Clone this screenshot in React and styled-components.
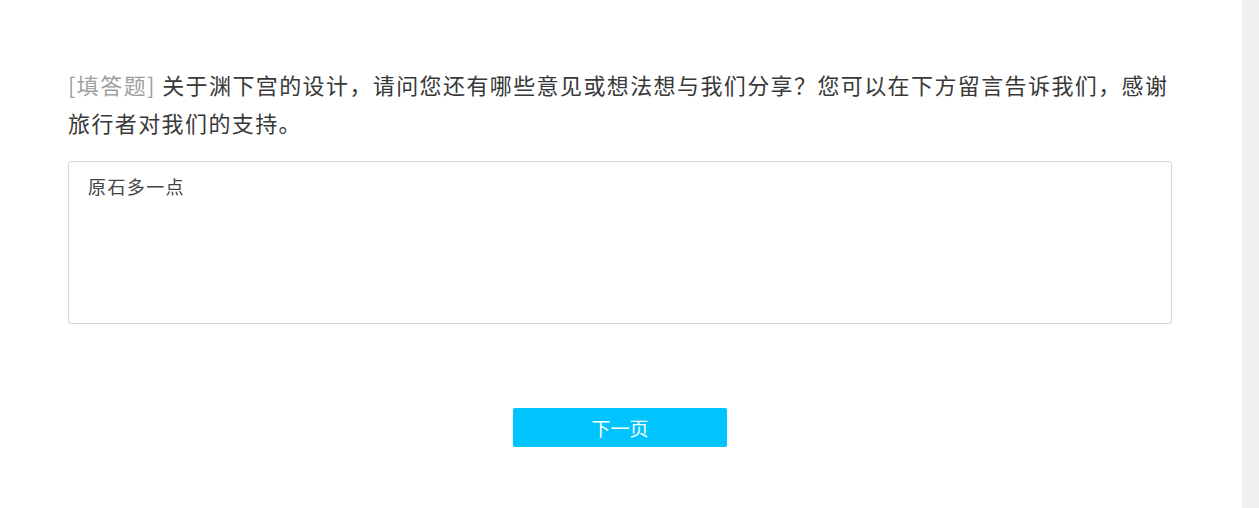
import React from 'react'
import styled, { createGlobalStyle } from 'styled-components'

const GlobalStyle = createGlobalStyle`
  html, body {
    margin: 0;
    padding: 0;
    background: #fff;
  }
  body {
    font-family: "Noto Sans CJK SC", "Noto Sans", sans-serif;
  }
`

export default function App() {
  return (
    <>
      <GlobalStyle />
      <Page>
        <Main>
          <Survey>
            <Question>
              <Tag>[填答题]</Tag> 关于渊下宫的设计，请问您还有哪些意见或想法想与我们分享？您可以在下方留言告诉我们，感谢旅行者对我们的支持。
            </Question>
            <Answer readOnly defaultValue="原石多一点" />
            <Footer>
              <NextButton type="button">下一页</NextButton>
            </Footer>
          </Survey>
        </Main>
        <ScrollTrack />
      </Page>
    </>
  )
}

const Page = styled.div`
  display: flex;
  width: 100vw;
  height: 100vh;
  overflow: hidden;
`

const Main = styled.div`
  flex: 1;
  padding-top: 65px;
`

const Survey = styled.div`
  width: 1104px;
  margin: 0 70px 0 68px;
  display: flex;
  flex-direction: column;
`

const Question = styled.div`
  font-size: 22px;
  letter-spacing: 1.4px;
  line-height: 38px;
  color: #383838;
`

const Tag = styled.span`
  color: #a0a0a0;
`

const Answer = styled.textarea`
  margin-top: 20px;
  box-sizing: border-box;
  width: 100%;
  height: 163px;
  padding: 12px 19px;
  border: 1px solid #d6d6d6;
  border-radius: 3px;
  resize: none;
  outline: none;
  font-family: "Noto Sans CJK SC", "Noto Sans", sans-serif;
  font-size: 18px;
  letter-spacing: 1.4px;
  line-height: 24px;
  color: #444;
  background: #fff;
`

const Footer = styled.div`
  display: flex;
  justify-content: center;
  padding-top: 84px;
`

const NextButton = styled.button`
  width: 214px;
  height: 39px;
  border: none;
  border-radius: 2px;
  background: #00c4ff;
  color: #fff;
  font-family: "Noto Sans CJK SC", "Noto Sans", sans-serif;
  font-size: 19px;
  cursor: pointer;
`

const ScrollTrack = styled.div`
  width: 17px;
  flex-shrink: 0;
  background: #f0f0f0;
`
